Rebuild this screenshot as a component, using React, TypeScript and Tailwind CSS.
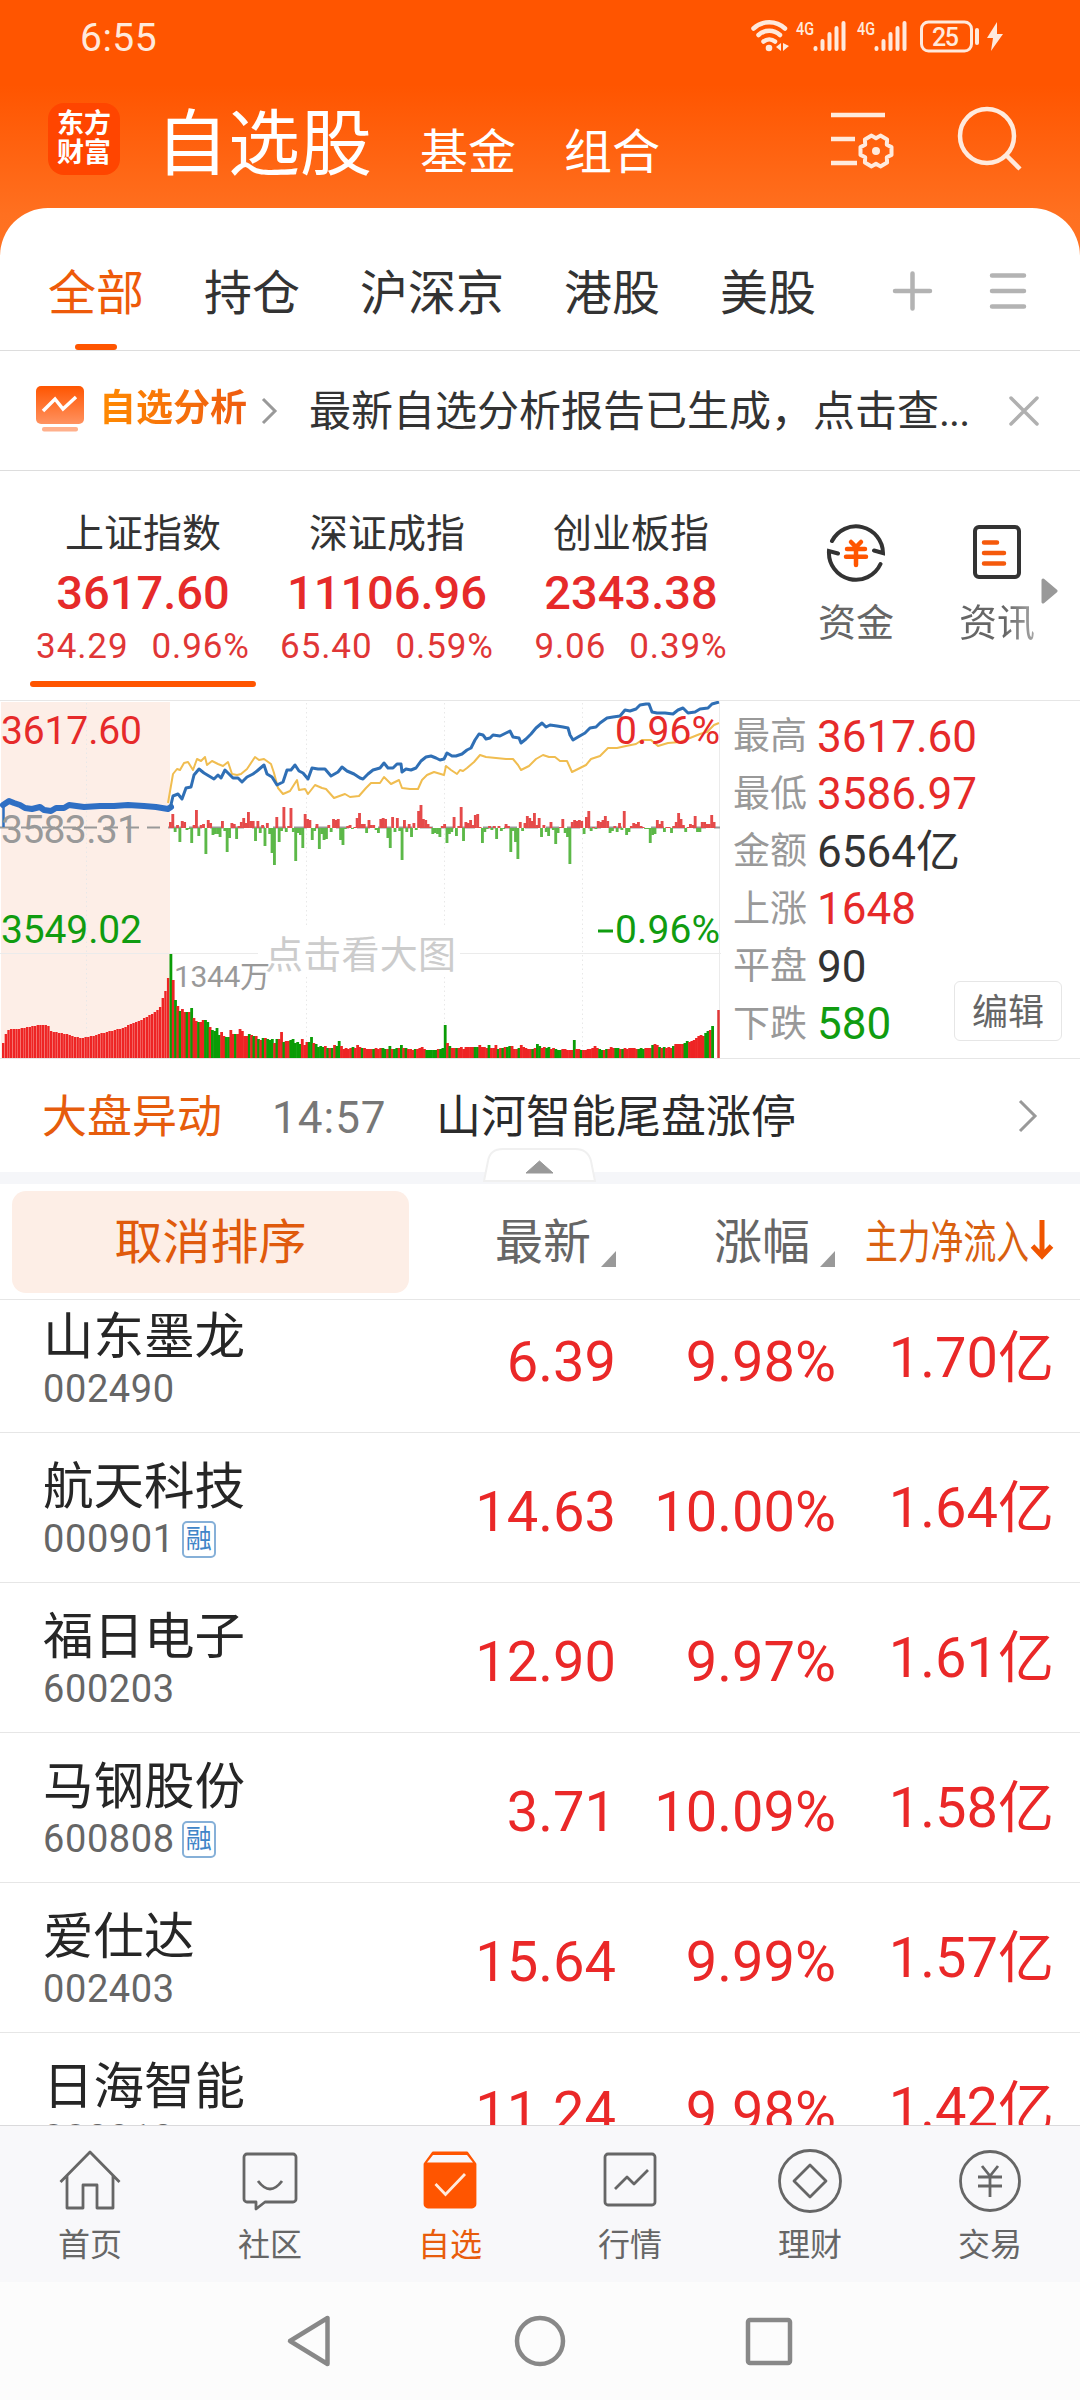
import React from 'react';

const CJK = "font-['Roboto','Noto_Sans_CJK_SC',sans-serif]";

interface Stock {
  name: string;
  code: string;
  margin?: boolean;
  price: string;
  change: string;
  inflow: string;
}

const STOCKS: Stock[] = [
  { name: '山东墨龙', code: '002490', price: '6.39', change: '9.98%', inflow: '1.70' },
  { name: '航天科技', code: '000901', margin: true, price: '14.63', change: '10.00%', inflow: '1.64' },
  { name: '福日电子', code: '600203', price: '12.90', change: '9.97%', inflow: '1.61' },
  { name: '马钢股份', code: '600808', margin: true, price: '3.71', change: '10.09%', inflow: '1.58' },
  { name: '爱仕达', code: '002403', price: '15.64', change: '9.99%', inflow: '1.57' },
  { name: '日海智能', code: '002313', price: '11.24', change: '9.98%', inflow: '1.42' },
];

const INDICES = [
  { name: '上证指数', value: '3617.60', diff: '34.29', pct: '0.96%', active: true },
  { name: '深证成指', value: '11106.96', diff: '65.40', pct: '0.59%', active: false },
  { name: '创业板指', value: '2343.38', diff: '9.06', pct: '0.39%', active: false },
];

const QUOTE = [
  { label: '最高', value: '3617.60', tone: 'text-[#e62a2a]' },
  { label: '最低', value: '3586.97', tone: 'text-[#e62a2a]' },
  { label: '金额', value: '6564亿', tone: 'text-[#333333]' },
  { label: '上涨', value: '1648', tone: 'text-[#e62a2a]' },
  { label: '平盘', value: '90', tone: 'text-[#333333]' },
  { label: '下跌', value: '580', tone: 'text-[#109c10]' },
];

const StatusBar: React.FC = () => (
  <div className="flex h-[74px] items-center justify-between pl-[80px] pr-[76px] text-[#ffe9dc]">
    <span className="pt-[3px] text-[39px] tracking-[0.5px]">6:55</span>
    <svg width="254" height="40" viewBox="750 17 254 40" fill="none" stroke="#ffe9dc" strokeWidth="4.5" strokeLinecap="round">
      <path d="M753.5 28.500a23 23 0 0 1 31.500 0M758.500 35a16 16 0 0 1 21.500 0M763.500 41.500a9 9 0 0 1 11.500 0" />
      <circle cx="769" cy="48" r="3.3" fill="#ffe9dc" stroke="none" />
      <path d="M781 43v8l-5-4zM783 43v8l6-5z" fill="#ffe9dc" stroke="none" />
      <g strokeWidth="4">
        <path d="M815.500 48v1M822.500 41v8M829.500 34v15M836.500 28v21M843.500 23v26" />
        <path d="M876.500 48v1M883.500 41v8M890.500 34v15M897.500 28v21M904.500 23v26" />
      </g>
      <g fill="#ffe9dc" stroke="none" fontFamily="Roboto, sans-serif" fontWeight="500">
        <text x="796" y="34.500" fontSize="19" textLength="18" lengthAdjust="spacingAndGlyphs">4G</text>
        <text x="857" y="34.500" fontSize="19" textLength="18" lengthAdjust="spacingAndGlyphs">4G</text>
        <text x="932" y="45.500" fontSize="25" textLength="27">25</text>
      </g>
      <rect x="921.500" y="22" width="50" height="29" rx="7" strokeWidth="3" />
      <path d="M977 30v13" strokeWidth="4" />
      <path d="M997 22l-10 16h6l-2 13 12-17h-6z" fill="#ffe9dc" stroke="none" />
    </svg>
  </div>
);

const AppHeader: React.FC = () => (
  <div className="flex h-[134px] pl-[48px] pr-[58px]">
    <div className="mt-[29px] flex h-[72px] w-[72px] flex-col items-center justify-center rounded-[16px] bg-[#ff4500] text-[27px] font-bold leading-[29px] text-white">
      <span>东方</span>
      <span>财富</span>
    </div>
    <div className="ml-[36px] mt-[4px] flex flex-1 items-baseline leading-[133px] text-white">
      <span className="text-[72px]">自选股</span>
      <span className="ml-[48px] text-[48px]">基金</span>
      <span className="ml-[48px] text-[48px]">组合</span>
    </div>
    <svg className="mt-[30px]" width="194" height="70" viewBox="828 104 194 70" fill="none" stroke="#ffeadd" strokeWidth="4.500">
      <path d="M831 115h54M831 139h24M831 163h26" />
      <path
        transform="translate(876 151)"
        d="M15.500-3.900V3.900L10.800 6.300L11.100 11.500L4.400 15.400L0 12.800L-4.400 15.400L-11.100 11.500L-10.800 6.300L-15.500 3.900V-3.900L-10.800-6.300L-11.100-11.500L-4.400-15.400L0-12.800L4.400-15.400L11.100-11.500L10.800-6.300Z"
        strokeWidth="4"
        strokeLinejoin="round"
      />
      <circle cx="876" cy="151" r="4" fill="#ffeadd" stroke="none" />
      <circle cx="987" cy="136" r="27" />
      <path d="M1006 155l14 14" />
    </svg>
  </div>
);

const GroupTabs: React.FC = () => (
  <div className="flex h-[143px] items-start border-b border-[#dddddd] text-[48px] leading-[68px] text-[#333333]">
    <div className="ml-[48px] mt-[52px] flex h-[90px] flex-col items-center justify-between text-[#ee5a0a]">
      <span>全部</span>
      <span className="h-[6px] w-[42px] rounded-full bg-[#ff5500]" />
    </div>
    <span className="ml-[60px] mt-[52px]">持仓</span>
    <span className="ml-[60px] mt-[52px]">沪深京</span>
    <span className="ml-[60px] mt-[52px]">港股</span>
    <span className="ml-[60px] mt-[52px]">美股</span>
    <svg className="ml-[76px] mt-[62px]" width="136" height="44" viewBox="892 270 136 44" stroke="#b3b3b3" strokeWidth="4.500" strokeLinecap="round">
      <path d="M895 291h35M912.500 273.500v35M992 275.500h32M992 291h32M992 306.500h32" />
    </svg>
  </div>
);

const AnalysisNotice: React.FC = () => (
  <div className="flex h-[120px] items-center border-b border-[#dddddd] pl-[35px] pr-[40px]">
    <svg className="-mt-1" width="50" height="48" viewBox="0 0 50 48">
      <defs>
        <linearGradient id="notice" x1="0" y1="0" x2="0" y2="1">
          <stop offset="0" stopColor="#ff5500" />
          <stop offset="1" stopColor="#ff9260" />
        </linearGradient>
      </defs>
      <rect x="1" y="1" width="48" height="38" rx="5" fill="url(#notice)" />
      <path d="M8 26l12-12 8 10 13-12" fill="none" stroke="#fff" strokeWidth="3.500" />
      <rect x="7" y="42" width="36" height="4.500" rx="2" fill="#ffb08c" />
    </svg>
    <span className="-mt-[3px] ml-[14px] bg-gradient-to-r from-[#ff8a00] to-[#ee5a10] bg-clip-text text-[37px] font-bold text-transparent">自选分析</span>
    <svg className="ml-[13px]" width="20" height="28" viewBox="0 0 20 28" fill="none" stroke="#999" strokeWidth="3">
      <path d="M3 2l12 12L3 26" />
    </svg>
    <span className="ml-[29px] whitespace-nowrap pt-[2px] text-[42px] text-[#333333]">
      最新自选分析报告已生成，点击查<span className="tracking-[-1px]">...</span>
    </span>
    <svg className="ml-auto shrink-0" width="32" height="32" viewBox="0 0 32 32" stroke="#b0b0b0" strokeWidth="3.500" strokeLinecap="round">
      <path d="M3 3l26 26M29 3L3 29" />
    </svg>
  </div>
);

const IndexStrip: React.FC = () => (
  <div className="flex h-[229px] pl-[21px]">
    {INDICES.map((item) => (
      <div key={item.name} className="flex w-[244px] flex-col items-center pt-[38px]">
        <span className="text-[39px] leading-[50px] text-[#333333]">{item.name}</span>
        <span className="text-[47px] font-medium leading-[67px] text-[#e62a2a]">{item.value}</span>
        <span className="flex gap-[23px] text-[35px] leading-[42px] tracking-[0.9px] text-[#e03636]">
          <span>{item.diff}</span>
          <span>{item.pct}</span>
        </span>
        {item.active && <span className="mt-[13px] h-[6px] w-[226px] rounded-full bg-[#ff5500]" />}
      </div>
    ))}
    <div className="ml-[63px] flex w-[80px] flex-col items-center pt-[50px] text-[38px] leading-[54px] text-[#666666]">
      <svg width="62" height="62" viewBox="-31 -31 62 62" fill="none" stroke="#333333" strokeWidth="4" strokeLinecap="round">
        <path d="M-24-11A27 27 0 0 1 27 1L18-1.500M24.500 12A27 27 0 0 1-27-1L-18 1.500" />
        <path d="M-5-10l5 5 5-5M-9-3H9M-10 4.700H10M0-4v17" stroke="#ff5500" strokeWidth="4.500" />
      </svg>
      <span className="mt-[13px]">资金</span>
    </div>
    <div className="ml-[61px] flex w-[80px] flex-col items-center pt-[53px] text-[38px] leading-[54px]">
      <svg width="50" height="56" viewBox="0 0 50 56" fill="none" stroke="#333333" strokeWidth="4">
        <rect x="3" y="3" width="44" height="50" rx="4" />
        <path d="M12 18.500h13M12 29h20M12 39.500h20" stroke="#f55a0c" strokeWidth="4.500" strokeLinecap="round" />
      </svg>
      <span className="mt-[16px] whitespace-nowrap bg-gradient-to-r from-[#666666] from-60% to-[#a8a8a8] bg-clip-text text-transparent">资讯</span>
    </div>
    <svg className="mt-[107px] ml-[4px]" width="18" height="26" viewBox="0 0 18 26">
      <path d="M2 2l13 11L2 24z" fill="#999" stroke="#999" strokeWidth="3" strokeLinejoin="round" />
    </svg>
  </div>
);

// sampled along the intraday line, "x,y" in chart pixels
const PRICE_LINE =
  '170,119 173,106 178,104 182,109 186,98 191,97 194,85 199,79 204,83 209,86 214,89 218,85 221,88 225,80 228,83 233,88 238,88 242,92 247,87 253,84 257,81 264,75 267,84 272,87 277,95 283,92 287,80 291,80 295,75 299,81 303,83 308,89 312,78 318,79 325,79 331,86 338,82 342,77 347,81 354,84 360,88 363,89 368,84 373,80 380,78 384,73 388,78 393,78 397,74 401,74 402,82 406,79 411,80 416,78 421,71 426,67 431,66 436,68 440,70 444,69 447,63 452,66 456,66 462,64 467,60 471,58 475,50 479,44 483,45 486,49 490,48 493,45 500,46 506,43 510,41 513,47 519,48 521,53 526,49 531,44 536,38 542,33 546,37 550,35 557,36 563,37 568,38 570,45 573,50 578,47 585,43 590,38 596,37 600,33 607,28 613,27 620,26 625,20 630,21 636,19 640,15 646,14 649,14 652,22 657,23 665,23 673,24 678,20 683,18 688,23 695,22 700,19 708,18 712,14 719,12';

const AVG_LINE =
  '168,113 173,84 177,79 180,80 184,73 188,72 193,80 197,69 201,71 205,67 207,75 212,71 218,74 223,76 228,72 232,84 237,85 241,84 247,79 255,67 259,70 264,69 271,74 274,83 278,98 283,104 290,101 297,90 299,100 305,99 308,104 315,95 322,98 326,99 334,108 345,104 350,107 359,106 366,98 371,93 380,93 384,87 391,94 395,92 399,90 402,98 410,99 418,99 422,90 427,85 434,82 444,85 446,76 451,80 457,84 460,80 463,81 467,78 474,72 480,65 486,67 496,68 506,69 513,69 518,75 521,80 529,76 536,69 543,65 549,67 555,67 560,71 567,71 572,82 578,79 586,75 591,69 600,66 608,58 617,58 626,56 636,54 642,50 651,50 658,56 668,53 680,52 690,48 700,44 707,42 714,35 719,33';

const AUCTION_LINE =
  '3,115 9,111 14,113 20,115 25,118 32,119 40,117 44,120 51,121 56,118 64,118 69,115 84,117 100,116 114,116 128,115 144,116 156,117 168,119 171,117';

// money flow per bar: positive above the axis, negative below
const FLOW = [
  6, 14, -4, 3, -14, 7, 6, -2, -1, -15, 3, 18, -8, 3, 4, -26, 8, 5, -7, -6, -6, -9, 7, -3, -24, -10, 5, 4, -11, 2, 6, 10, 5,
  16, 7, 7, -13, 7, -5, 3, -18, 5, -6, -25, -37, 11, -14, -3, 21, -4, 2, 20, -4, -33, -5, -7, -20, 14, 9, 8, -12, -3, 4, -21,
  -6, -12, -11, 3, -4, 9, 8, 9, -12, -17, -1, 2, 3, -1, 1, 10, 15, 4, 4, -5, 8, 3, 3, -2, -5, 9, 10, 9, -10, -20, 11, -4, 10,
  -3, -32, 8, -4, 4, -9, 5, -2, 17, 23, 9, 8, 4, 1, -6, -5, -6, -9, 2, 4, -15, -6, -4, 11, -8, 2, 21, -13, 6, 5, 8, 3, 13,
  14, 1, -15, -4, -1, 2, -2, 2, -11, 2, -3, -1, 4, 2, -24, -3, -14, -31, 6, -3, 5, 12, 10, 7, 15, 3, 10, -9, 3, -4, -8, 6,
  -2, -16, -5, 1, 9, -5, -9, -36, 6, 8, 7, 8, 7, -6, 11, 17, -3, 1, -1, 7, 6, 8, 12, 7, -5, -3, 2, -4, 5, -2, 17, -7, -4, 2,
  5, 4, 6, 2, 1, -1, -1, -15, -7, -6, 8, 4, 7, -4, 1, 1, -5, 2, 6, 15, 9, 3, -4, 1, 4, 3, 12, -4, -4, 6, 6, 4, 4, 13, 6,
];

// opening auction volume, then continuous trading volume
const AUCTION_VOLUME = [
  15, 24, 28, 29, 29, 29, 29, 30, 30, 31, 31, 32, 32, 33, 33, 33, 33, 32, 27, 26, 26, 25, 25, 24, 24, 23, 22, 21, 21, 20, 20,
  21, 21, 22, 22, 23, 24, 25, 25, 26, 27, 27, 28, 29, 29, 30, 31, 33, 34, 35, 36, 37, 38, 40, 41, 43, 44, 46, 48, 51, 60, 67,
  80,
];

const TRADE_VOLUME = [
  104, 78, 58, 52, 47, 49, 46, 46, 46, 50, 40, 37, 36, 36, 38, 38, 36, 31, 28, 27, 30, 23, 26, 22, 21, 21, 28, 24, 24, 24, 29,
  27, 22, 22, 24, 23, 22, 22, 19, 18, 20, 20, 19, 18, 19, 15, 19, 19, 26, 16, 17, 17, 18, 19, 15, 16, 14, 19, 13, 16, 16, 21,
  15, 14, 11, 12, 11, 12, 10, 10, 10, 13, 12, 17, 12, 9, 10, 9, 10, 11, 10, 13, 11, 10, 10, 9, 9, 9, 9, 10, 9, 10, 10, 9, 9,
  12, 9, 9, 10, 10, 13, 10, 10, 9, 9, 8, 9, 9, 10, 11, 9, 8, 8, 8, 8, 8, 9, 9, 10, 33, 15, 12, 10, 10, 10, 10, 11, 9, 11, 11,
  11, 11, 11, 11, 13, 11, 11, 10, 13, 10, 10, 13, 9, 10, 10, 11, 11, 12, 12, 9, 9, 10, 13, 11, 10, 9, 9, 9, 10, 14, 12, 10,
  11, 10, 11, 9, 10, 9, 8, 8, 9, 9, 8, 8, 8, 18, 9, 9, 8, 8, 8, 9, 9, 10, 12, 10, 9, 8, 8, 9, 9, 11, 10, 10, 10, 9, 9, 10, 9,
  10, 10, 10, 9, 9, 10, 9, 10, 10, 10, 13, 14, 13, 11, 10, 11, 10, 11, 10, 12, 14, 14, 14, 14, 15, 17, 16, 17, 18, 20, 22,
  23, 22, 25, 27, 28, 32,
];

const FLOW_STEP = 546 / FLOW.length;
const VOLUME_STEP = 544 / TRADE_VOLUME.length;

const isDown = (i: number) => i === 0 || FLOW[i % FLOW.length] < -3 || i % 9 === 7;

const IntradayChart: React.FC = () => (
  <svg className="shrink-0" width="721" height="358" viewBox="0 0 721 358" fontFamily="Roboto, 'Noto Sans CJK SC', sans-serif">
    <rect x="1" y="1" width="169" height="356" fill="#fdeee7" />
    <g stroke="#e8e8e8" strokeWidth="1" strokeDasharray="1.500 3">
      <path d="M86.500 2v355M306.500 2v225M306.500 276v80M444.500 2v225M444.500 276v80M582.500 2v355" />
    </g>
    <path d="M0 252.500h258M460 252.500h261M719.500 0v358" stroke="#ebebeb" strokeWidth="1" fill="none" />
    <path d="M0 126.500h720" stroke="#999" strokeWidth="2" strokeDasharray="13 8" />
    {FLOW.map((v, i) => (
      <rect
        key={i}
        x={169 + i * FLOW_STEP}
        y={v > 0 ? 127 - v : 127}
        width={FLOW_STEP + 0.5}
        height={Math.abs(v)}
        fill={v > 0 ? '#e54a4a' : '#5cb848'}
      />
    ))}
    {AUCTION_VOLUME.map((v, i) => (
      <rect key={i} x={2 + i * 2.66} y={357 - v} width="2.400" height={v} fill="#ee2424" />
    ))}
    {TRADE_VOLUME.map((v, i) => (
      <rect
        key={i}
        x={169.5 + i * VOLUME_STEP}
        y={357 - v}
        width={VOLUME_STEP + 0.5}
        height={v}
        fill={isDown(i) ? '#0a9c06' : '#ee2424'}
      />
    ))}
    <path d="M718.500 309v48" stroke="#e03636" strokeWidth="2.500" />
    <g fill="none" strokeLinejoin="round" transform="translate(0 -11)">
      <polyline points={AVG_LINE} stroke="#f0bd50" strokeWidth="2" />
      <path d="M3.500 137v-22" stroke="#2f6fbf" strokeWidth="2.500" />
      <polyline points={AUCTION_LINE} stroke="#2f6fc4" strokeWidth="6" strokeLinecap="round" />
      <polyline points={PRICE_LINE} stroke="#2f6fb5" strokeWidth="3" />
    </g>
    <g fontSize="39">
      <text x="1" y="43" fill="#e62a2a" textLength="141">3617.60</text>
      <text x="1" y="142" fill="#999999" textLength="138">3583.31</text>
      <text x="1" y="242" fill="#109c10" textLength="141">3549.02</text>
      <text x="720" y="43" fill="#e62a2a" textAnchor="end" textLength="105">0.96%</text>
      <text x="615" y="242" fill="#109c10" textLength="105">0.96%</text>
      <path d="M598 230h15" stroke="#109c10" strokeWidth="3" />
    </g>
    <text x="174" y="285.500" fill="#999999" fontSize="30" textLength="96">1344万</text>
    <text x="265" y="267" fill="#cccccc" fontSize="38" textLength="191">点击看大图</text>
  </svg>
);

const MarketPanel: React.FC = () => (
  <div className="flex h-[359px] border-y border-[#e6e6e6]">
    <IntradayChart />
    <div className="relative flex flex-1 flex-col pl-[12px] pt-[7px]">
      {QUOTE.map((q) => (
        <div key={q.label} className="flex h-[57.500px] items-center whitespace-nowrap">
          <span className="w-[84px] text-[37px] text-[#999999]">{q.label}</span>
          <span className={`text-[44px] ${q.tone}`}>{q.value}</span>
        </div>
      ))}
      <div className="absolute bottom-[17px] right-[18px] flex h-[60px] w-[108px] items-center justify-center rounded-[6px] border border-[#e6e6e6] bg-white pt-[4px] text-[36px] text-[#666666]">
        编辑
      </div>
    </div>
  </div>
);

const MarketAlert: React.FC = () => (
  <div className="relative flex h-[125px] items-center border-b-[12px] border-[#f5f6f9] pl-[42px] pr-[42px] pt-[4px] text-[45px]">
    <span className="text-[#e65c0c]">大盘异动</span>
    <span className="ml-[50px] w-[164px] text-[44px] tracking-[1px] text-[#777777]">14:57</span>
    <span className="whitespace-nowrap text-[#2b2b2b]">山河智能尾盘涨停</span>
    <svg className="-mt-[3px] ml-auto" width="20" height="34" viewBox="0 0 20 34" fill="none" stroke="#999" strokeWidth="3">
      <path d="M2 2l15 15L2 32" />
    </svg>
    <svg className="absolute -bottom-[10px] left-[483px]" width="113" height="34" viewBox="0 0 113 34">
      <path d="M1 33L5 13Q7 1 20 1H92Q105 1 108 13L112 33z" fill="#fff" stroke="#f0f0f0" strokeWidth="2" />
      <path d="M43 25L56.500 13 70 25z" fill="#999" stroke="#999" strokeLinejoin="round" />
    </svg>
  </div>
);

const SortMark: React.FC = () => (
  <svg className="mt-[32px] ml-[10px]" width="15" height="16" viewBox="0 0 15 16">
    <path d="M15 0v16H0z" fill="#999" />
  </svg>
);

const TableHead: React.FC = () => (
  <div className="flex h-[116px] items-center border-b border-[#e6e6e6] pl-[12px] text-[48px] text-[#666666]">
    <div className="flex h-[102px] w-[397px] items-center justify-center rounded-[14px] bg-[#fdeee6] pt-[2px] text-[#e05a0c]">取消排序</div>
    <div className="flex w-[207px] items-center justify-end pt-[2px]">
      最新
      <SortMark />
    </div>
    <div className="flex w-[219px] items-center justify-end pt-[2px]">
      涨幅
      <SortMark />
    </div>
    <svg className="ml-[30px]" width="190" height="72" viewBox="0 -4 190 72">
      <text x="0" y="48" fontSize="46" fill="#d9600f" fontFamily="'Noto Sans CJK SC', sans-serif" textLength="164" lengthAdjust="spacingAndGlyphs">主力净流入</text>
      <path d="M177 10v36M167.500 36l9.500 10 9.500-10" fill="none" stroke="#f05500" strokeWidth="5" />
    </svg>
  </div>
);

const StockRow: React.FC<{ stock: Stock }> = ({ stock }) => (
  <div className="flex h-[150px] shrink-0 border-b border-[#e6e6e6] pl-[43px] pr-[26px]">
    <div className="flex w-[272px] shrink-0 flex-col pt-[24px]">
      <span className="text-[50.500px] leading-[60px] text-[#262626]">{stock.name}</span>
      <span className="flex items-center text-[38px] leading-[44px] text-[#666666]">
        <span className="tracking-[0.6px]">{stock.code}</span>
        {stock.margin && (
          <span className="ml-[7px] flex h-[37px] w-[34px] items-center justify-center rounded-[5px] border-2 border-[#86b0d8] text-[26px] leading-[33px] text-[#3f85c8]">融</span>
        )}
      </span>
    </div>
    <div className="flex flex-1 pt-[39px] text-[56px] leading-[72px] text-[#ea2828]">
      <span className="mt-[4px] w-[301px] shrink-0 text-right">{stock.price}</span>
      <span className="mt-[4px] w-[220px] shrink-0 text-right">{stock.change}</span>
      <span className="flex-1 whitespace-nowrap text-right">{stock.inflow}亿</span>
    </div>
  </div>
);

const TabItem: React.FC<{ label: string; active?: boolean; children: React.ReactNode }> = ({ label, active, children }) => (
  <div className={`flex flex-1 flex-col items-center pt-[22px] text-[32px] ${active ? 'text-[#e85c0c]' : 'text-[#666666]'}`}>
    <svg width="68" height="66" viewBox="0 0 68 66" fill="none" stroke="currentColor" strokeWidth="2.800" strokeLinejoin="round">
      {children}
    </svg>
    <span className="mt-[8px] leading-[46px]">{label}</span>
  </div>
);

const BottomTabs: React.FC = () => (
  <div className="flex h-[157px] shrink-0 border-t border-[#dadadc] bg-[#f8f8fa]">
    <TabItem label="首页">
      <path d="M4.500 34L34 4l29.500 30M11 28v32h16V37h14v23h16V28" />
    </TabItem>
    <TabItem label="社区">
      <path d="M11 6h46a3 3 0 0 1 3 3v42a3 3 0 0 1-3 3H29l-9 7v-7H11a3 3 0 0 1-3-3V9a3 3 0 0 1 3-3z" />
      <path d="M22 33q12 16 24 0" />
    </TabItem>
    <TabItem label="自选" active>
      <path d="M9 16L17 5h34l8 11v40a3 3 0 0 1-3 3H12a3 3 0 0 1-3-3z" fill="#ff5500" stroke="#ff5500" />
      <path d="M11 14.500L17 7h34l6 7.500z" fill="#f8f8fa" stroke="none" />
      <path d="M19.500 36L29.500 46.500 49 26" stroke="#ffeadd" strokeLinejoin="miter" />
    </TabItem>
    <TabItem label="行情">
      <rect x="9" y="6" width="50" height="51" rx="3" />
      <path d="M19 41l12-12 7 7 14-14" />
    </TabItem>
    <TabItem label="理财">
      <circle cx="34" cy="33" r="30.500" />
      <path d="M34 17l16 16-16 16-16-16z" />
    </TabItem>
    <TabItem label="交易">
      <circle cx="34" cy="33" r="29.500" />
      <path d="M26 18l8 10 8-10M22 29h24M22 38h24M34 28v21" />
    </TabItem>
  </div>
);

const SystemNav: React.FC = () => (
  <div className="flex h-[118px] shrink-0 items-center justify-center bg-[#fcfcfc]">
    <svg width="510" height="56" viewBox="285 312 510 56" fill="none" stroke="#888888" strokeWidth="4.500" strokeLinejoin="round">
      <path d="M327.500 317v46L290 340z" />
      <circle cx="540" cy="340" r="23" />
      <rect x="748" y="319" width="42" height="43" rx="2" />
    </svg>
  </div>
);

const App: React.FC = () => {
  return (
    <div className={`flex h-[2400px] w-[1080px] flex-col overflow-hidden bg-[linear-gradient(180deg,#ff5500_0px,#ff5500_85px,#ff7020_215px,#ff7424_260px)] ${CJK}`}>
      <StatusBar />
      <AppHeader />
      <main className="flex min-h-0 flex-1 flex-col rounded-t-[48px] bg-white">
        <GroupTabs />
        <AnalysisNotice />
        <IndexStrip />
        <MarketPanel />
        <MarketAlert />
        <TableHead />
        <div className="-mt-[17px] flex min-h-0 flex-1 flex-col overflow-hidden">
          {STOCKS.map((s) => (
            <StockRow key={s.code} stock={s} />
          ))}
        </div>
      </main>
      <BottomTabs />
      <SystemNav />
    </div>
  );
};

export default App;
